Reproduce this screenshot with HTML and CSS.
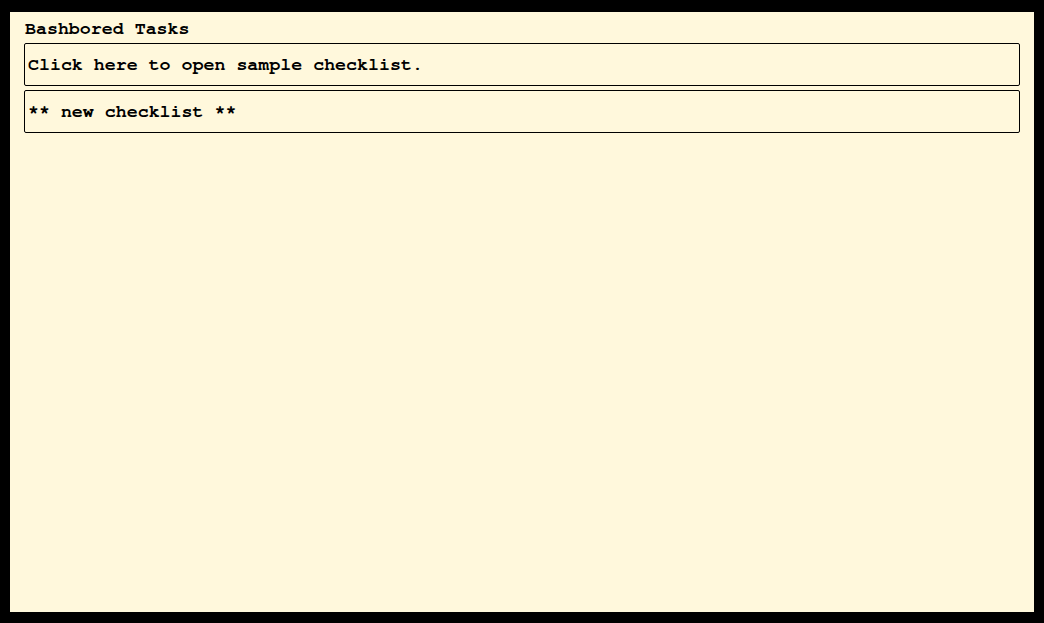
FILE: index.html
```html
<!DOCTYPE html>
<html>
<head>
<meta charset="utf-8">
<link rel="stylesheet" href="styles.css">
</head>
<body>
<div class="panel">
  <div class="title">Bashbored Tasks</div>
  <div class="list">
    <div class="item">Click here to open sample checklist.</div>
    <div class="item">** new checklist **</div>
  </div>
</div>
</body>
</html>
```

FILE: styles.css
```css
html, body {
  margin: 0;
  padding: 0;
  background: #000;
}
body {
  padding: 12px 10px 11px 10px;
  font-family: "Nimbus Mono PS", "FreeMono", "Liberation Mono", "Courier New", monospace;
  font-weight: bold;
  font-size: 18.3px;
  color: #000;
}
.panel {
  width: 1024px;
  height: 600px;
  box-sizing: border-box;
  background: #fff8dc;
  padding: 7px 14px 0 14px;
  display: flex;
  flex-direction: column;
}
.title {
  line-height: 20px;
  height: 20px;
  padding-left: 1px;
  margin-bottom: 4px;
}
.list {
  display: flex;
  flex-direction: column;
  gap: 4px;
}
.item {
  box-sizing: border-box;
  height: 43px;
  border: 1px solid #000;
  border-radius: 2px;
  padding: 0 3px;
  display: flex;
  align-items: center;
  line-height: 20px;
  cursor: pointer;
}
```
